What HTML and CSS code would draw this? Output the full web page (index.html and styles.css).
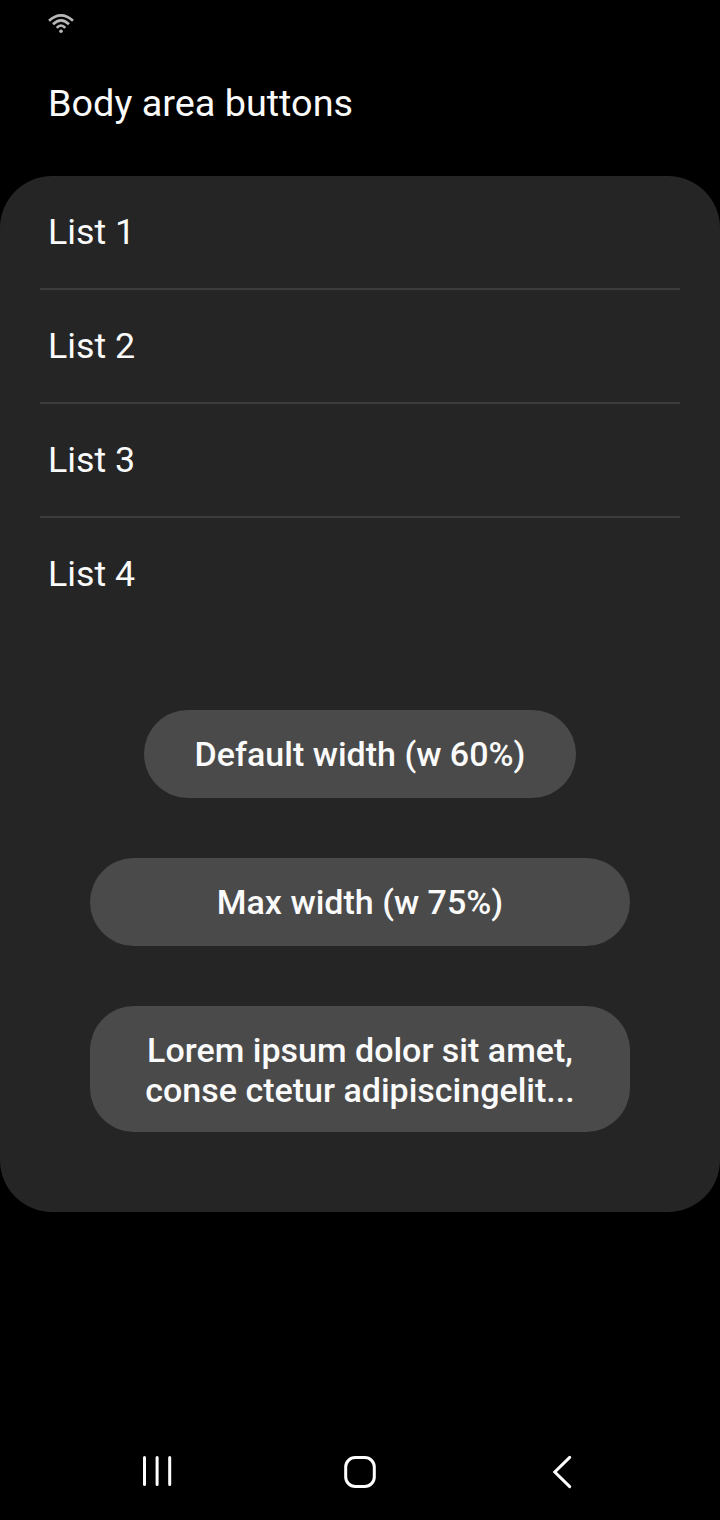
FILE: index.html
```html
<!DOCTYPE html>
<html lang="en">
<head>
<meta charset="utf-8">
<title>Body area buttons</title>
<link rel="stylesheet" href="styles.css">
</head>
<body>
<div class="status">
<svg class="wifi" width="26" height="20" viewBox="0 0 26 20" fill="none" stroke="#b8b8b8" stroke-width="2.6"><path d="M1 6.7Q13-3.9 25 6.7M5 10.3Q13 2.4 21 10.3M8.7 13.9Q13 9.2 17.3 13.9"/><circle cx="13" cy="17.3" r="1.8" fill="#b8b8b8" stroke="none"/></svg>
</div>
<header class="title">Body area buttons</header>
<main class="card">
<ul class="list">
<li class="item">List 1</li>
<li class="item">List 2</li>
<li class="item">List 3</li>
<li class="item">List 4</li>
</ul>
<div class="buttons">
<button class="btn default">Default width (w 60%)</button>
<button class="btn">Max width (w 75%)</button>
<button class="btn tall">Lorem ipsum dolor sit amet,<br>conse ctetur adipiscingelit...</button>
</div>
</main>
<nav class="nav">
<svg width="32" height="34" viewBox="0 0 32 34" stroke="#fff" stroke-width="3" stroke-linecap="round"><path d="M2.5 2.5v27M15.1 2.5v27M27.7 2.5v27"/></svg>
<svg width="34" height="34" viewBox="0 0 34 34" fill="none" stroke="#fff" stroke-width="3"><rect x="3.7" y="2.6" width="28.6" height="28.8" rx="9.5"/></svg>
<svg width="34" height="34" viewBox="0 0 34 34" fill="none" stroke="#fff" stroke-width="3" stroke-linecap="round"><path d="M25.7 2.4L10.8 17 25.7 31.6"/></svg>
</nav>
</body>
</html>
```
FILE: styles.css
```css
* { box-sizing: border-box; }
body { margin: 0; width: 720px; height: 1520px; background: #000; color: #fafafa; font-family: Roboto, sans-serif; display: flex; flex-direction: column; overflow: hidden; }
.status { height: 48px; padding: 14px 48px 0; }
.wifi { display: block; }
.title { height: 128px; padding: 33px 48px 0; font-size: 37.8px; line-height: 44px; }
.card { height: 1036px; border-radius: 52px; background: #252525; }
.list { list-style: none; margin: 0; padding: 0 40px; }
.item { height: 114px; padding: 0 8px; font-size: 35.8px; line-height: 112px; border-bottom: 2px solid #3c3c3c; }
.item:last-child { border-bottom: 0; }
.buttons { display: flex; flex-direction: column; align-items: center; gap: 60px; padding-top: 78px; }
.btn { width: 540px; height: 88px; padding: 0; border: 0; border-radius: 44px; background: #4a4a4a; color: #fafafa; font: 500 34px/40px Roboto, sans-serif; }
.default { width: 432px; }
.tall { height: 126px; padding-top: 2px; }
.nav { margin-top: auto; height: 96px; padding: 0 142px; display: flex; justify-content: space-between; align-items: center; }
```
